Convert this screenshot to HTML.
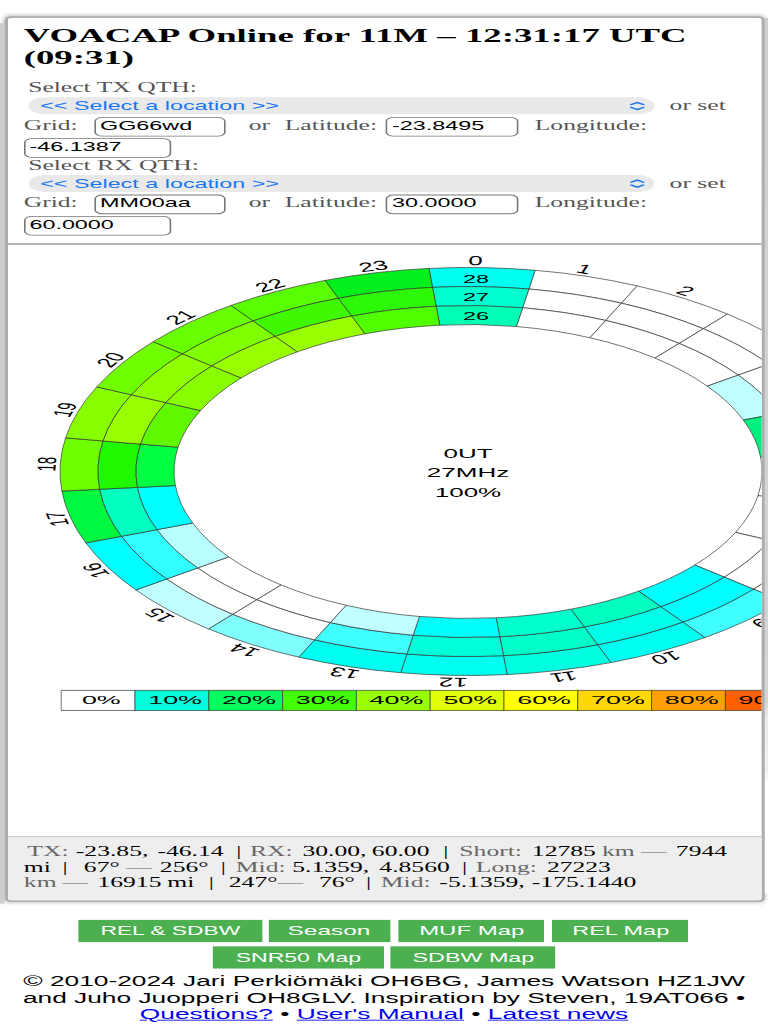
<!DOCTYPE html>
<html><head><meta charset="utf-8"><title>VOACAP Online for 11M</title>
<style>
html,body{margin:0;padding:0;background:#fff;overflow:hidden;}
body{width:768px;height:1024px;position:relative;}
#wrap{position:absolute;left:0;top:0;width:480px;height:1200px;transform-origin:0 0;transform:scale(1.6,0.853333);font-family:"Liberation Serif",serif;font-size:16px;color:#000;}
#card{position:absolute;left:2.5px;top:19px;width:471.4px;height:1034.2px;border:2.3px solid #adadad;border-radius:4px;box-shadow:0 0 5px rgba(0,0,0,.32);background:#fff;overflow:hidden;}
#card>*{position:absolute;}
h2{margin:0;font-size:23px;line-height:25.8px;font-weight:bold;left:10.3px;top:7.8px;width:450px;}
.lbl{color:#555;white-space:pre;line-height:18px;}
.sel{left:13.7px;height:19.9px;width:391px;border-radius:10px;background:#e9e9ea;color:#1878f3;font-family:"Liberation Sans",sans-serif;font-size:14.6px;line-height:20.5px;padding-left:6.9px;box-sizing:border-box;white-space:pre;}
.sel svg{position:absolute;right:5.3px;top:3.9px;}
.inp{height:23px;box-sizing:border-box;border:1px solid #777;border-radius:5px;background:#fff;font-family:"Liberation Sans",sans-serif;font-size:14.6px;line-height:19.6px;padding-left:2.6px;color:#000;white-space:pre;}
.num{font-size:15.25px;}
#hr1{left:0;top:264.4px;width:480px;height:1.2px;background:#aaa;}
#chart{left:-4.7px;top:-21.2px;}
#chart .c{stroke:#333;stroke-width:0.46;stroke-linejoin:round;}
#chart text{fill:#000;}
#info{left:0;top:958.9px;width:480px;height:80px;background:#eee;border-top:1.2px solid #bbb;}
#info span{position:absolute;line-height:18px;white-space:pre;}
#foot{position:absolute;left:0;top:1141.2px;width:480px;text-align:center;font-family:"Liberation Sans",sans-serif;font-size:16.45px;line-height:18.75px;color:#000;}
#ls{position:absolute;left:0;top:27px;width:2.6px;height:1032px;background:#cdcdcd;}
#rs{position:absolute;left:478.2px;top:21px;width:2.3px;height:1026px;background:linear-gradient(to bottom,#cfcfcf 0,#d4d4d4 78%,#ececec 80%,#efefef 86%,#fff 87.5%,#fff 100%);}
#btns{position:absolute;left:0;top:0;font-family:"Liberation Sans",sans-serif;}
.btn{position:absolute;background:#4caf50;color:#fff;font-size:14.5px;text-align:center;white-space:pre;}
.btn span{display:inline-block;}
#foot a{color:#0000ee;text-decoration:underline;}
#foot .c{white-space:pre;}
</style></head><body>
<div id="wrap">
<div id="card">
<h2>VOACAP Online for 11M &ndash; 12:31:17 UTC (09:31)</h2>
<span class="lbl" style="left:13.1px;top:72.8px">Select TX QTH:</span>
<div class="sel" style="top:93.1px">&lt;&lt; Select a location &gt;&gt;<svg width="10.6" height="12.4" viewBox="0 0 9 12" preserveAspectRatio="none"><path d="M1.3 4.4L4.5 2.0L7.7 4.4M1.3 7.6L4.5 10.0L7.7 7.6" fill="none" stroke="#1878f3" stroke-width="1.4" stroke-linecap="round" stroke-linejoin="round"/></svg></div>
<span class="lbl" style="left:414px;top:94.1px">or set</span>
<span class="lbl" style="left:10.3px;top:116.7px">Grid:</span>
<div class="inp" style="left:54.4px;top:115.9px;width:82.5px">GG66wd</div>
<span class="lbl" style="left:150.9px;top:116.7px">or</span>
<span class="lbl" style="left:173.4px;top:116.7px">Latitude:</span>
<div class="inp" style="left:236.9px;top:115.9px;width:82.8px">-23.8495</div>
<span class="lbl" style="left:329.7px;top:116.7px">Longitude:</span>
<div class="inp" style="left:10.3px;top:140.5px;width:91.9px">-46.1387</div>
<span class="lbl" style="left:13.1px;top:164.0px">Select RX QTH:</span>
<div class="sel" style="top:184.3px">&lt;&lt; Select a location &gt;&gt;<svg width="10.6" height="12.4" viewBox="0 0 9 12" preserveAspectRatio="none"><path d="M1.3 4.4L4.5 2.0L7.7 4.4M1.3 7.6L4.5 10.0L7.7 7.6" fill="none" stroke="#1878f3" stroke-width="1.4" stroke-linecap="round" stroke-linejoin="round"/></svg></div>
<span class="lbl" style="left:414px;top:185.3px">or set</span>
<span class="lbl" style="left:10.3px;top:207.9px">Grid:</span>
<div class="inp" style="left:54.4px;top:207.1px;width:82.5px">MM00aa</div>
<span class="lbl" style="left:150.9px;top:207.9px">or</span>
<span class="lbl" style="left:173.4px;top:207.9px">Latitude:</span>
<div class="inp" style="left:236.9px;top:207.1px;width:82.8px">30.0000</div>
<span class="lbl" style="left:329.7px;top:207.9px">Longitude:</span>
<div class="inp" style="left:10.3px;top:231.7px;width:91.9px">60.0000</div>
<div id="hr1"></div>
<svg id="chart" width="480" height="1200" viewBox="0 0 384 1024" preserveAspectRatio="none" font-family="Liberation Sans, sans-serif">
<g>
<path class="c" d="M214.45 268.44A204 204 0 0 1 267.67 270.3L264.53 289.04A185 185 0 0 0 216.27 287.35Z" fill="#00fff0"/>
<path class="c" d="M216.27 287.35A185 185 0 0 1 264.53 289.04L261.4 307.78A166 166 0 0 0 218.09 306.26Z" fill="#00ffd0"/>
<path class="c" d="M218.09 306.26A166 166 0 0 1 261.4 307.78L258.26 326.52A147 147 0 0 0 219.91 325.18Z" fill="#00ffb4"/>
<path class="c" d="M267.67 270.3A204 204 0 0 1 318.6 285.87L310.72 303.16A185 185 0 0 0 264.53 289.04Z" fill="#ffffff"/>
<path class="c" d="M264.53 289.04A185 185 0 0 1 310.72 303.16L302.84 320.45A166 166 0 0 0 261.4 307.78Z" fill="#ffffff"/>
<path class="c" d="M261.4 307.78A166 166 0 0 1 302.84 320.45L294.96 337.74A147 147 0 0 0 258.26 326.52Z" fill="#ffffff"/>
<path class="c" d="M318.6 285.87A204 204 0 0 1 363.76 314.09L351.67 328.75A185 185 0 0 0 310.72 303.16Z" fill="#ffffff"/>
<path class="c" d="M310.72 303.16A185 185 0 0 1 351.67 328.75L339.59 343.41A166 166 0 0 0 302.84 320.45Z" fill="#ffffff"/>
<path class="c" d="M302.84 320.45A166 166 0 0 1 339.59 343.41L327.5 358.07A147 147 0 0 0 294.96 337.74Z" fill="#ffffff"/>
<path class="c" d="M363.76 314.09A204 204 0 0 1 400.08 353.04L384.61 364.07A185 185 0 0 0 351.67 328.75Z" fill="#ffffff"/>
<path class="c" d="M351.67 328.75A185 185 0 0 1 384.61 364.07L369.14 375.1A166 166 0 0 0 339.59 343.41Z" fill="#ffffff"/>
<path class="c" d="M339.59 343.41A166 166 0 0 1 369.14 375.1L353.67 386.14A147 147 0 0 0 327.5 358.07Z" fill="#ffffff"/>
<path class="c" d="M400.08 353.04A204 204 0 0 1 425.08 400.06L407.28 406.71A185 185 0 0 0 384.61 364.07Z" fill="#ffffff"/>
<path class="c" d="M384.61 364.07A185 185 0 0 1 407.28 406.71L389.49 413.37A166 166 0 0 0 369.14 375.1Z" fill="#ffffff"/>
<path class="c" d="M369.14 375.1A166 166 0 0 1 389.49 413.37L371.69 420.02A147 147 0 0 0 353.67 386.14Z" fill="#c0ffff"/>
<path class="c" d="M425.08 400.06A204 204 0 0 1 437.06 451.95L418.15 453.77A185 185 0 0 0 407.28 406.71Z" fill="#ffffff"/>
<path class="c" d="M407.28 406.71A185 185 0 0 1 418.15 453.77L399.24 455.59A166 166 0 0 0 389.49 413.37Z" fill="#ffffff"/>
<path class="c" d="M389.49 413.37A166 166 0 0 1 399.24 455.59L380.32 457.41A147 147 0 0 0 371.69 420.02Z" fill="#00f080"/>
<path class="c" d="M437.06 451.95A204 204 0 0 1 435.2 505.17L416.46 502.03A185 185 0 0 0 418.15 453.77Z" fill="#ffffff"/>
<path class="c" d="M418.15 453.77A185 185 0 0 1 416.46 502.03L397.72 498.9A166 166 0 0 0 399.24 455.59Z" fill="#ffffff"/>
<path class="c" d="M399.24 455.59A166 166 0 0 1 397.72 498.9L378.98 495.76A147 147 0 0 0 380.32 457.41Z" fill="#ffffff"/>
<path class="c" d="M435.2 505.17A204 204 0 0 1 419.63 556.1L402.34 548.22A185 185 0 0 0 416.46 502.03Z" fill="#ffffff"/>
<path class="c" d="M416.46 502.03A185 185 0 0 1 402.34 548.22L385.05 540.34A166 166 0 0 0 397.72 498.9Z" fill="#ffffff"/>
<path class="c" d="M397.72 498.9A166 166 0 0 1 385.05 540.34L367.76 532.46A147 147 0 0 0 378.98 495.76Z" fill="#ffffff"/>
<path class="c" d="M419.63 556.1A204 204 0 0 1 391.41 601.26L376.75 589.17A185 185 0 0 0 402.34 548.22Z" fill="#ffffff"/>
<path class="c" d="M402.34 548.22A185 185 0 0 1 376.75 589.17L362.09 577.09A166 166 0 0 0 385.05 540.34Z" fill="#ffffff"/>
<path class="c" d="M385.05 540.34A166 166 0 0 1 362.09 577.09L347.43 565A147 147 0 0 0 367.76 532.46Z" fill="#ffffff"/>
<path class="c" d="M391.41 601.26A204 204 0 0 1 352.46 637.58L341.43 622.11A185 185 0 0 0 376.75 589.17Z" fill="#40ffff"/>
<path class="c" d="M376.75 589.17A185 185 0 0 1 341.43 622.11L330.4 606.64A166 166 0 0 0 362.09 577.09Z" fill="#00ffff"/>
<path class="c" d="M362.09 577.09A166 166 0 0 1 330.4 606.64L319.36 591.17A147 147 0 0 0 347.43 565Z" fill="#00ffff"/>
<path class="c" d="M352.46 637.58A204 204 0 0 1 305.44 662.58L298.79 644.78A185 185 0 0 0 341.43 622.11Z" fill="#00fff0"/>
<path class="c" d="M341.43 622.11A185 185 0 0 1 298.79 644.78L292.13 626.99A166 166 0 0 0 330.4 606.64Z" fill="#00ffe8"/>
<path class="c" d="M330.4 606.64A166 166 0 0 1 292.13 626.99L285.48 609.19A147 147 0 0 0 319.36 591.17Z" fill="#00ffc0"/>
<path class="c" d="M305.44 662.58A204 204 0 0 1 253.55 674.56L251.73 655.65A185 185 0 0 0 298.79 644.78Z" fill="#00ffe0"/>
<path class="c" d="M298.79 644.78A185 185 0 0 1 251.73 655.65L249.91 636.74A166 166 0 0 0 292.13 626.99Z" fill="#00ffc8"/>
<path class="c" d="M292.13 626.99A166 166 0 0 1 249.91 636.74L248.09 617.82A147 147 0 0 0 285.48 609.19Z" fill="#00ffcc"/>
<path class="c" d="M253.55 674.56A204 204 0 0 1 200.33 672.7L203.47 653.96A185 185 0 0 0 251.73 655.65Z" fill="#00fff0"/>
<path class="c" d="M251.73 655.65A185 185 0 0 1 203.47 653.96L206.6 635.22A166 166 0 0 0 249.91 636.74Z" fill="#00ffd8"/>
<path class="c" d="M249.91 636.74A166 166 0 0 1 206.6 635.22L209.74 616.48A147 147 0 0 0 248.09 617.82Z" fill="#00fffa"/>
<path class="c" d="M200.33 672.7A204 204 0 0 1 149.4 657.13L157.28 639.84A185 185 0 0 0 203.47 653.96Z" fill="#00fff0"/>
<path class="c" d="M203.47 653.96A185 185 0 0 1 157.28 639.84L165.16 622.55A166 166 0 0 0 206.6 635.22Z" fill="#40ffff"/>
<path class="c" d="M206.6 635.22A166 166 0 0 1 165.16 622.55L173.04 605.26A147 147 0 0 0 209.74 616.48Z" fill="#c0ffff"/>
<path class="c" d="M149.4 657.13A204 204 0 0 1 104.24 628.91L116.33 614.25A185 185 0 0 0 157.28 639.84Z" fill="#80ffff"/>
<path class="c" d="M157.28 639.84A185 185 0 0 1 116.33 614.25L128.41 599.59A166 166 0 0 0 165.16 622.55Z" fill="#ffffff"/>
<path class="c" d="M165.16 622.55A166 166 0 0 1 128.41 599.59L140.5 584.93A147 147 0 0 0 173.04 605.26Z" fill="#ffffff"/>
<path class="c" d="M104.24 628.91A204 204 0 0 1 67.92 589.96L83.39 578.93A185 185 0 0 0 116.33 614.25Z" fill="#c0ffff"/>
<path class="c" d="M116.33 614.25A185 185 0 0 1 83.39 578.93L98.86 567.9A166 166 0 0 0 128.41 599.59Z" fill="#ffffff"/>
<path class="c" d="M128.41 599.59A166 166 0 0 1 98.86 567.9L114.33 556.86A147 147 0 0 0 140.5 584.93Z" fill="#ffffff"/>
<path class="c" d="M67.92 589.96A204 204 0 0 1 42.92 542.94L60.72 536.29A185 185 0 0 0 83.39 578.93Z" fill="#00ffff"/>
<path class="c" d="M83.39 578.93A185 185 0 0 1 60.72 536.29L78.51 529.63A166 166 0 0 0 98.86 567.9Z" fill="#30ffff"/>
<path class="c" d="M98.86 567.9A166 166 0 0 1 78.51 529.63L96.31 522.98A147 147 0 0 0 114.33 556.86Z" fill="#b8ffff"/>
<path class="c" d="M42.92 542.94A204 204 0 0 1 30.94 491.05L49.85 489.23A185 185 0 0 0 60.72 536.29Z" fill="#00f840"/>
<path class="c" d="M60.72 536.29A185 185 0 0 1 49.85 489.23L68.76 487.41A166 166 0 0 0 78.51 529.63Z" fill="#00ffc0"/>
<path class="c" d="M78.51 529.63A166 166 0 0 1 68.76 487.41L87.68 485.59A147 147 0 0 0 96.31 522.98Z" fill="#00ffff"/>
<path class="c" d="M30.94 491.05A204 204 0 0 1 32.8 437.83L51.54 440.97A185 185 0 0 0 49.85 489.23Z" fill="#70ff00"/>
<path class="c" d="M49.85 489.23A185 185 0 0 1 51.54 440.97L70.28 444.1A166 166 0 0 0 68.76 487.41Z" fill="#20f800"/>
<path class="c" d="M68.76 487.41A166 166 0 0 1 70.28 444.1L89.02 447.24A147 147 0 0 0 87.68 485.59Z" fill="#00ff40"/>
<path class="c" d="M32.8 437.83A204 204 0 0 1 48.37 386.9L65.66 394.78A185 185 0 0 0 51.54 440.97Z" fill="#88ff00"/>
<path class="c" d="M51.54 440.97A185 185 0 0 1 65.66 394.78L82.95 402.66A166 166 0 0 0 70.28 444.1Z" fill="#98ff00"/>
<path class="c" d="M70.28 444.1A166 166 0 0 1 82.95 402.66L100.24 410.54A147 147 0 0 0 89.02 447.24Z" fill="#60f800"/>
<path class="c" d="M48.37 386.9A204 204 0 0 1 76.59 341.74L91.25 353.83A185 185 0 0 0 65.66 394.78Z" fill="#70ff00"/>
<path class="c" d="M65.66 394.78A185 185 0 0 1 91.25 353.83L105.91 365.91A166 166 0 0 0 82.95 402.66Z" fill="#90ff00"/>
<path class="c" d="M82.95 402.66A166 166 0 0 1 105.91 365.91L120.57 378A147 147 0 0 0 100.24 410.54Z" fill="#88ff00"/>
<path class="c" d="M76.59 341.74A204 204 0 0 1 115.54 305.42L126.57 320.89A185 185 0 0 0 91.25 353.83Z" fill="#68ff00"/>
<path class="c" d="M91.25 353.83A185 185 0 0 1 126.57 320.89L137.6 336.36A166 166 0 0 0 105.91 365.91Z" fill="#80ff00"/>
<path class="c" d="M105.91 365.91A166 166 0 0 1 137.6 336.36L148.64 351.83A147 147 0 0 0 120.57 378Z" fill="#98ff00"/>
<path class="c" d="M115.54 305.42A204 204 0 0 1 162.56 280.42L169.21 298.22A185 185 0 0 0 126.57 320.89Z" fill="#58ff00"/>
<path class="c" d="M126.57 320.89A185 185 0 0 1 169.21 298.22L175.87 316.01A166 166 0 0 0 137.6 336.36Z" fill="#40f800"/>
<path class="c" d="M137.6 336.36A166 166 0 0 1 175.87 316.01L182.52 333.81A147 147 0 0 0 148.64 351.83Z" fill="#98ff00"/>
<path class="c" d="M162.56 280.42A204 204 0 0 1 214.45 268.44L216.27 287.35A185 185 0 0 0 169.21 298.22Z" fill="#04f01c"/>
<path class="c" d="M169.21 298.22A185 185 0 0 1 216.27 287.35L218.09 306.26A166 166 0 0 0 175.87 316.01Z" fill="#2cf808"/>
<path class="c" d="M175.87 316.01A166 166 0 0 1 218.09 306.26L219.91 325.18A147 147 0 0 0 182.52 333.81Z" fill="#50ff00"/>
<text transform="translate(234 265.1) rotate(2)" font-size="13">0</text>
<text transform="translate(287.42 272.13) rotate(17)" font-size="13">1</text>
<text transform="translate(337.2 292.75) rotate(32)" font-size="13">2</text>
<text transform="translate(379.95 325.55) rotate(47)" font-size="13">3</text>
<text transform="translate(412.75 368.3) rotate(62)" font-size="13">4</text>
<text transform="translate(433.37 418.08) rotate(77)" font-size="13">5</text>
<text transform="translate(440.4 471.5) rotate(92)" font-size="13">6</text>
<text transform="translate(433.37 524.92) rotate(107)" font-size="13">7</text>
<text transform="translate(412.75 574.7) rotate(122)" font-size="13">8</text>
<text transform="translate(379.95 617.45) rotate(137)" font-size="13">9</text>
<text transform="translate(337.2 650.25) rotate(152)" font-size="13">10</text>
<text transform="translate(287.42 670.87) rotate(167)" font-size="13">11</text>
<text transform="translate(234 677.9) rotate(182)" font-size="13">12</text>
<text transform="translate(180.58 670.87) rotate(197)" font-size="13">13</text>
<text transform="translate(130.8 650.25) rotate(212)" font-size="13">14</text>
<text transform="translate(88.05 617.45) rotate(227)" font-size="13">15</text>
<text transform="translate(55.25 574.7) rotate(242)" font-size="13">16</text>
<text transform="translate(34.63 524.92) rotate(257)" font-size="13">17</text>
<text transform="translate(27.6 471.5) rotate(272)" font-size="13">18</text>
<text transform="translate(34.63 418.08) rotate(287)" font-size="13">19</text>
<text transform="translate(55.25 368.3) rotate(302)" font-size="13">20</text>
<text transform="translate(88.05 325.55) rotate(317)" font-size="13">21</text>
<text transform="translate(130.8 292.75) rotate(332)" font-size="13">22</text>
<text transform="translate(180.58 272.13) rotate(347)" font-size="13">23</text>
<text x="238" y="282.7" text-anchor="middle" font-size="11.7">28</text>
<text x="238" y="301.3" text-anchor="middle" font-size="11.7">27</text>
<text x="238" y="319.8" text-anchor="middle" font-size="11.7">26</text>
<text x="234" y="457.8" text-anchor="middle" font-size="13">0UT</text>
<text x="234" y="477.5" text-anchor="middle" font-size="13">27MHz</text>
<text x="234" y="496.8" text-anchor="middle" font-size="13">100%</text>
<rect class="c" x="30.6" y="690.4" width="36.9" height="20.1" fill="#ffffff"/>
<text transform="translate(50.65 704) scale(1.19 1)" text-anchor="middle" font-size="11.3">0%</text>
<rect class="c" x="67.5" y="690.4" width="36.9" height="20.1" fill="#00ffda"/>
<text transform="translate(87.55 704) scale(1.19 1)" text-anchor="middle" font-size="11.3">10%</text>
<rect class="c" x="104.4" y="690.4" width="36.9" height="20.1" fill="#00ff5e"/>
<text transform="translate(124.45 704) scale(1.19 1)" text-anchor="middle" font-size="11.3">20%</text>
<rect class="c" x="141.3" y="690.4" width="36.9" height="20.1" fill="#42ff06"/>
<text transform="translate(161.35 704) scale(1.19 1)" text-anchor="middle" font-size="11.3">30%</text>
<rect class="c" x="178.2" y="690.4" width="36.9" height="20.1" fill="#99ff00"/>
<text transform="translate(198.25 704) scale(1.19 1)" text-anchor="middle" font-size="11.3">40%</text>
<rect class="c" x="215.1" y="690.4" width="36.9" height="20.1" fill="#e0ff00"/>
<text transform="translate(235.15 704) scale(1.19 1)" text-anchor="middle" font-size="11.3">50%</text>
<rect class="c" x="252" y="690.4" width="36.9" height="20.1" fill="#ffff00"/>
<text transform="translate(272.05 704) scale(1.19 1)" text-anchor="middle" font-size="11.3">60%</text>
<rect class="c" x="288.9" y="690.4" width="36.9" height="20.1" fill="#ffd800"/>
<text transform="translate(308.95 704) scale(1.19 1)" text-anchor="middle" font-size="11.3">70%</text>
<rect class="c" x="325.8" y="690.4" width="36.9" height="20.1" fill="#ffa000"/>
<text transform="translate(345.85 704) scale(1.19 1)" text-anchor="middle" font-size="11.3">80%</text>
<rect class="c" x="362.7" y="690.4" width="36.9" height="20.1" fill="#ff6000"/>
<text transform="translate(382.75 704) scale(1.19 1)" text-anchor="middle" font-size="11.3">90%</text>
<rect class="c" x="399.6" y="690.4" width="36.9" height="20.1" fill="#ff0000"/>
<text transform="translate(419.65 704) scale(1.19 1)" text-anchor="middle" font-size="11.3">100%</text>
</g>
</svg>
<div id="info"><span style="left:12.6px;top:8.2px;color:#666">TX:</span><span style="left:42.9px;top:8.2px;color:#000">-23.85,</span><span style="left:93.9px;top:8.2px;color:#000">-46.14</span><span style="left:143.2px;top:8.2px;color:#000">|</span><span style="left:151.7px;top:8.2px;color:#666">RX:</span><span style="left:184.5px;top:8.2px;color:#000">30.00,</span><span style="left:227.9px;top:8.2px;color:#000">60.00</span><span style="left:272.6px;top:8.2px;color:#000">|</span><span style="left:282.6px;top:8.2px;color:#666">Short:</span><span style="left:327.9px;top:8.2px;color:#000">12785</span><span style="left:371.7px;top:8.2px;color:#666">km</span><span style="left:396.1px;top:8.2px;color:#666">—</span><span style="left:417.9px;top:8.2px;color:#000">7944</span><span style="left:10.4px;top:26.8px;color:#000">mi</span><span style="left:34.5px;top:26.8px;color:#000">|</span><span style="left:47.9px;top:26.8px;color:#000">67°</span><span style="left:74.2px;top:26.8px;color:#666">—</span><span style="left:95.4px;top:26.8px;color:#000">256°</span><span style="left:133.5px;top:26.8px;color:#000">|</span><span style="left:142.9px;top:26.8px;color:#666">Mid:</span><span style="left:178.2px;top:26.8px;color:#000">5.1359,</span><span style="left:232.6px;top:26.8px;color:#000">4.8560</span><span style="left:284.2px;top:26.8px;color:#000">|</span><span style="left:292.9px;top:26.8px;color:#666">Long:</span><span style="left:337.3px;top:26.8px;color:#000">27223</span><span style="left:10.4px;top:45.3px;color:#666">km</span><span style="left:34.5px;top:45.3px;color:#666">—</span><span style="left:56.4px;top:45.3px;color:#000">16915</span><span style="left:100.1px;top:45.3px;color:#000">mi</span><span style="left:126.0px;top:45.3px;color:#000">|</span><span style="left:138.5px;top:45.3px;color:#000">247°</span><span style="left:168.9px;top:45.3px;color:#666">—</span><span style="left:194.8px;top:45.3px;color:#000">76°</span><span style="left:224.2px;top:45.3px;color:#000">|</span><span style="left:233.5px;top:45.3px;color:#666">Mid:</span><span style="left:270.1px;top:45.3px;color:#000">-5.1359,</span><span style="left:327.9px;top:45.3px;color:#000">-175.1440</span></div>
</div>
<div id="ls"></div><div id="rs"></div>
<div id="btns"><div class="btn" style="left:48.56px;top:1077.77px;width:115.12px;height:26.48px;line-height:27.08px"><span style="transform:scaleX(0.9830)">REL &amp; SDBW</span></div><div class="btn" style="left:168.12px;top:1077.77px;width:75.94px;height:26.48px;line-height:27.08px"><span style="transform:scaleX(1.0526)">Season</span></div><div class="btn" style="left:248.56px;top:1077.77px;width:91.88px;height:26.48px;line-height:27.08px"><span style="transform:scaleX(1.0320)">MUF Map</span></div><div class="btn" style="left:344.87px;top:1077.77px;width:85.44px;height:26.48px;line-height:27.08px"><span style="transform:scaleX(1.0117)">REL Map</span></div><div class="btn" style="left:132.94px;top:1108.95px;width:106.81px;height:26.02px;line-height:26.62px"><span style="transform:scaleX(0.9920)">SNR50 Map</span></div><div class="btn" style="left:244.38px;top:1108.95px;width:102.44px;height:26.02px;line-height:26.62px"><span style="transform:scaleX(1.0042)">SDBW Map</span></div></div>
<div id="foot"><span class="c">&copy; 2010-2024 Jari Perki&ouml;m&auml;ki OH6BG, James Watson HZ1JW
and Juho Juopperi OH8GLV. Inspiration by Steven, 19AT066 &bull;
<a>Questions?</a> &bull; <a>User's Manual</a> &bull; <a>Latest news</a></span></div>
</div>
</body></html>
